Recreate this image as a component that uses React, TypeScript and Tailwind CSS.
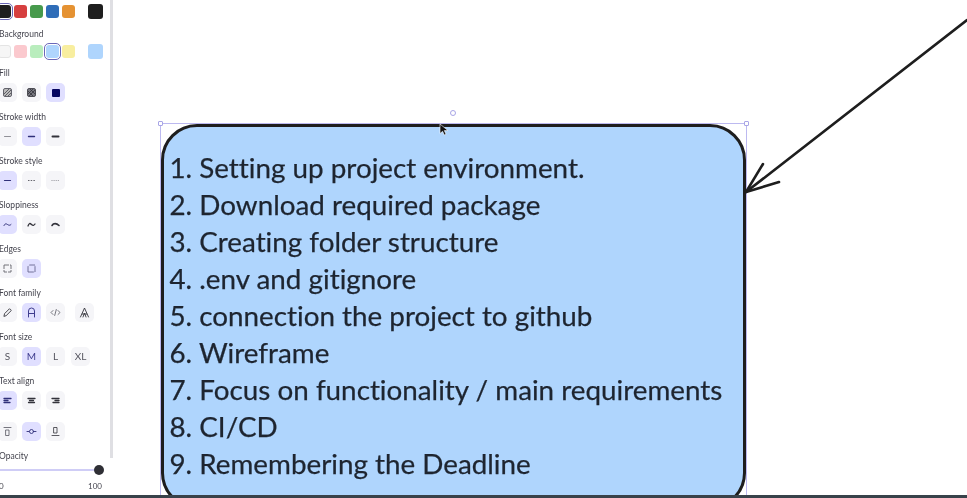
import React from "react";

const Label = ({ children, className = "" }: { children: React.ReactNode; className?: string }) => (
  <div className={`h-[14px] text-[8.5px] leading-[14px] text-[#45454f] whitespace-nowrap -ml-px ${className}`}>{children}</div>
);

const Btn = ({ active, children, className = "" }: { active?: boolean; children?: React.ReactNode; className?: string }) => (
  <div className={`w-[19px] h-[19px] rounded-[5px] flex items-center justify-center shrink-0 text-[10px] ${active ? "bg-[#e0dfff] text-[#3f3d8f]" : "bg-[#f5f5f8] text-[#55555f]"} ${className}`}>
    {children}
  </div>
);

const Ico = ({ children, color = "currentColor", w = 1.2, cap = "round" }: { children: React.ReactNode; color?: string; w?: number; cap?: "round" | "butt" }) => (
  <svg width="11" height="11" viewBox="0 0 11 11" fill="none" stroke={color} strokeWidth={w} strokeLinecap={cap} strokeLinejoin="round">
    {children}
  </svg>
);

const Swatch = ({ c, selected, className = "" }: { c: string; selected?: boolean; className?: string }) => (
  <div className={`w-[13px] h-[13px] rounded-[3px] shrink-0 ${selected ? "outline outline-1 outline-[#6a67b8] outline-offset-[1px]" : ""} ${className}`} style={{ background: c }} />
);

const Row = ({ children, className = "" }: { children: React.ReactNode; className?: string }) => (
  <div className={`flex gap-[5px] h-[19px] -ml-[2px] ${className}`}>{children}</div>
);

const Sidebar = () => (
  <aside className="relative w-[113px] h-[495px] shrink-0 bg-white overflow-hidden pt-[4px] text-[#45454f] blur-[0.3px]">
    <div className="absolute left-[110px] top-0 w-[3px] h-[458px] bg-[#dfdfe3]" />
    <div className="flex items-center h-[15px] -ml-[2px]">
      <Swatch c="#1e1e1e" selected />
      <div className="flex gap-[3px] ml-[3px]">
        <Swatch c="#d63f3f" />
        <Swatch c="#479a4c" />
        <Swatch c="#2f6db8" />
        <Swatch c="#e59232" />
      </div>
      <Swatch c="#1e1e1e" className="ml-[13px] w-[15px] h-[15px]" />
    </div>
    <Label className="mt-[8px]">Background</Label>
    <div className="flex items-center h-[15px] -ml-[2px] mt-[3px]">
      <div className="w-[13px] h-[13px] rounded-[3px] bg-[#f6f6f6] border border-[#e4e4e4] shrink-0" />
      <div className="flex gap-[3px] ml-[3px] items-center">
        <Swatch c="#fbc9ce" />
        <Swatch c="#b9edbd" />
        <Swatch c="#afd5fd" selected />
        <Swatch c="#f8ee9f" />
      </div>
      <Swatch c="#afd5fd" className="ml-[13px] w-[15px] h-[15px]" />
    </div>
    <Label className="mt-[7px]">Fill</Label>
    <Row className="mt-[3px]">
      <Btn><svg width="9" height="9" viewBox="0 0 9 9" fill="#bbb" stroke="#45454f" strokeWidth="0.8"><rect x="0.5" y="0.5" width="8" height="8" rx="1.5" /><path d="M1 6l5-5M2 8l6-6M5 8l3-3" /></svg></Btn>
      <Btn><svg width="9" height="9" viewBox="0 0 9 9" fill="#77777f" stroke="#33333b" strokeWidth="0.8"><rect x="0.5" y="0.5" width="8" height="8" rx="1.5" /><path d="M1 6l5-5M2 8l6-6M1 3l5 5M3 1l5 5" /></svg></Btn>
      <Btn active><div className="w-[8px] h-[8px] bg-[#060660] rounded-[1px]" /></Btn>
    </Row>
    <Label className="mt-[8px]">Stroke width</Label>
    <Row className="mt-[3px]">
      <Btn><Ico w={0.8} color="#77777f"><path d="M2.5 5.5h6" /></Ico></Btn>
      <Btn active><Ico w={1.4} color="#30307a"><path d="M2.5 5.5h6" /></Ico></Btn>
      <Btn><Ico w={2} color="#33333b"><path d="M2.5 5.5h6" /></Ico></Btn>
    </Row>
    <Label className="mt-[8px]">Stroke style</Label>
    <Row className="mt-[3px]">
      <Btn active><Ico color="#30307a"><path d="M2.5 5.5h6" /></Ico></Btn>
      <Btn><Ico w={1} color="#66666e" cap="butt"><path d="M2 5.5h1.5M4.7 5.5h1.5M7.4 5.5h1.5" /></Ico></Btn>
      <Btn><Ico w={0.9} color="#88888f" cap="butt"><path d="M1.5 5.5h1M3.6 5.5h1M5.7 5.5h1M7.8 5.5h1" /></Ico></Btn>
    </Row>
    <Label className="mt-[8px]">Sloppiness</Label>
    <Row className="mt-[3px]">
      <Btn active><Ico w={1} color="#30307a"><path d="M2 6.5C3 4.5 4 4.5 5.5 5.5S8 6.5 9 5.5" /></Ico></Btn>
      <Btn><Ico w={1.3} color="#33333b"><path d="M2 7C3 4 4 4 5.5 5.5S8 6.5 9 5" /></Ico></Btn>
      <Btn><Ico w={1.6} color="#33333b"><path d="M2 6.5C3.5 4 6.5 4 9 6.5" /></Ico></Btn>
    </Row>
    <Label className="mt-[8px]">Edges</Label>
    <Row className="mt-[3px]">
      <Btn><Ico w={0.9} color="#66666e" cap="butt"><path d="M2 2h7v7H2z" strokeDasharray="5 1" /></Ico></Btn>
      <Btn active><Ico w={0.9} color="#66668e" cap="butt"><path d="M2 9V4a2 2 0 0 1 2-2h5v7z" strokeDasharray="6 1" /></Ico></Btn>
    </Row>
    <Label className="mt-[8px]">Font family</Label>
    <Row className="mt-[3px]">
      <Btn><Ico w={0.9} color="#33333b"><path d="M2 9l.6-2.4L7.5 1.7l1.8 1.8-4.9 4.9z" /></Ico></Btn>
      <Btn active><Ico w={1} color="#3f3d8f"><path d="M2.5 10V4a3 3 0 0 1 6 0v6M2.5 6.5h6" /></Ico></Btn>
      <Btn><Ico w={0.8} color="#55555f"><path d="M3 3.5L1 5.5l2 2M8 3.5l2 2-2 2M6.3 2.5l-1.6 6" /></Ico></Btn>
      <Btn className="ml-[5px]"><Ico w={0.9} color="#33333b"><path d="M1.5 10l4-9 4 9M3.2 7h4.6M4 10l1.5-4 1.5 4" /></Ico></Btn>
    </Row>
    <Label className="mt-[8px]">Font size</Label>
    <Row className="mt-[3px]">
      <Btn>S</Btn>
      <Btn active>M</Btn>
      <Btn>L</Btn>
      <Btn className="ml-px">XL</Btn>
    </Row>
    <Label className="mt-[8px]">Text align</Label>
    <Row className="mt-[3px]">
      <Btn active><Ico w={1.3} color="#30307a"><path d="M2 3.5h7M2 5.5h4M2 7.5h6" /></Ico></Btn>
      <Btn><Ico w={1.3} color="#33333b"><path d="M2 3.5h7M3.5 5.5h4M2.5 7.5h6" /></Ico></Btn>
      <Btn><Ico w={1.3} color="#33333b"><path d="M2 3.5h7M5 5.5h4M3 7.5h6" /></Ico></Btn>
    </Row>
    <Row className="mt-[12px]">
      <Btn><Ico w={0.8} color="#55555f"><path d="M2 1.5h7M4 4h3v5.5H4z" /></Ico></Btn>
      <Btn active><Ico w={0.9} color="#30307a"><path d="M1 5.5h2M8 5.5h2" /><circle cx="5.5" cy="5.5" r="2" /></Ico></Btn>
      <Btn><Ico w={0.8} color="#33333b"><path d="M2 9.5h7M4 1.5h3V7H4z" /></Ico></Btn>
    </Row>
    <Label className="mt-[8px]">Opacity</Label>
    <div className="relative h-[14px]">
      <div className="absolute left-0 top-[6px] h-[2px] w-[98px] bg-[#cfcdf6]" />
      <div className="absolute left-[94px] top-[2px] w-[10px] h-[10px] rounded-full bg-[#2f2f35]" />
    </div>
    <div className="flex justify-between w-[103px] -ml-px text-[8px] leading-[10px] text-[#45454f] mt-[4px]">
      <span>0</span>
      <span>100</span>
    </div>
  </aside>
);

const items = [
  "1. Setting up project environment.",
  "2. Download required package",
  "3. Creating folder structure",
  "4. .env and gitignore",
  "5. connection the project to github",
  "6. Wireframe",
  "7. Focus on functionality / main requirements",
  "8. CI/CD",
  "9. Remembering the Deadline",
];

const Handle = ({ className }: { className: string }) => (
  <div className={`absolute w-[5px] h-[5px] rounded-[1px] border border-[#a8a5e6] bg-white ${className}`} />
);

export default function App() {
  return (
    <div className="w-[967px] h-[498px] relative overflow-hidden bg-white font-['Lato','Noto_Sans',sans-serif]">
      <div className="flex h-[495px]">
        <Sidebar />
        <main className="relative flex-1 overflow-hidden bg-white">
          {/* free canvas: offsets are relative to the area beside the panel */}
          <div className="absolute left-[48px] top-[124px] w-[585px] h-[385px] rounded-[36px] border-[3px] border-[#1e1e1e] bg-[#afd5fd] pl-[5.5px] pt-[22px] text-[#1e2530] text-[27.8px] leading-[37px] whitespace-nowrap [font-variant-ligatures:none] [-webkit-text-stroke:0.25px_#1e2530] blur-[0.2px]">
            {items.map((t) => (
              <div key={t}>{t}</div>
            ))}
          </div>
          <div className="absolute left-[47px] top-[123px] w-[587px] h-[380px] border border-[#bcb9f0]" />
          <Handle className="left-[45px] top-[121px]" />
          <Handle className="left-[631px] top-[121px]" />
          <div className="absolute left-[337px] top-[110px] w-[6px] h-[6px] rounded-full border border-[#a8a5e6] bg-white" />
          <svg className="absolute left-0 top-0" width="854" height="495" fill="none" stroke="#1e1e1e" strokeWidth="2.6" strokeLinecap="round">
            <path d="M854 20L633 192" />
            <path d="M650 164L633 192L666 182" />
          </svg>
          <svg className="absolute left-[326px] top-[123px]" width="12" height="14" viewBox="0 0 12 14">
            <path d="M1 1v9.5l2.6-2.2 1.7 3.7 1.7-.8-1.7-3.6H9z" fill="#111" stroke="#fff" strokeWidth="0.6" />
          </svg>
        </main>
      </div>
      <div className="h-[3px] bg-[#38424a]" />
    </div>
  );
}
